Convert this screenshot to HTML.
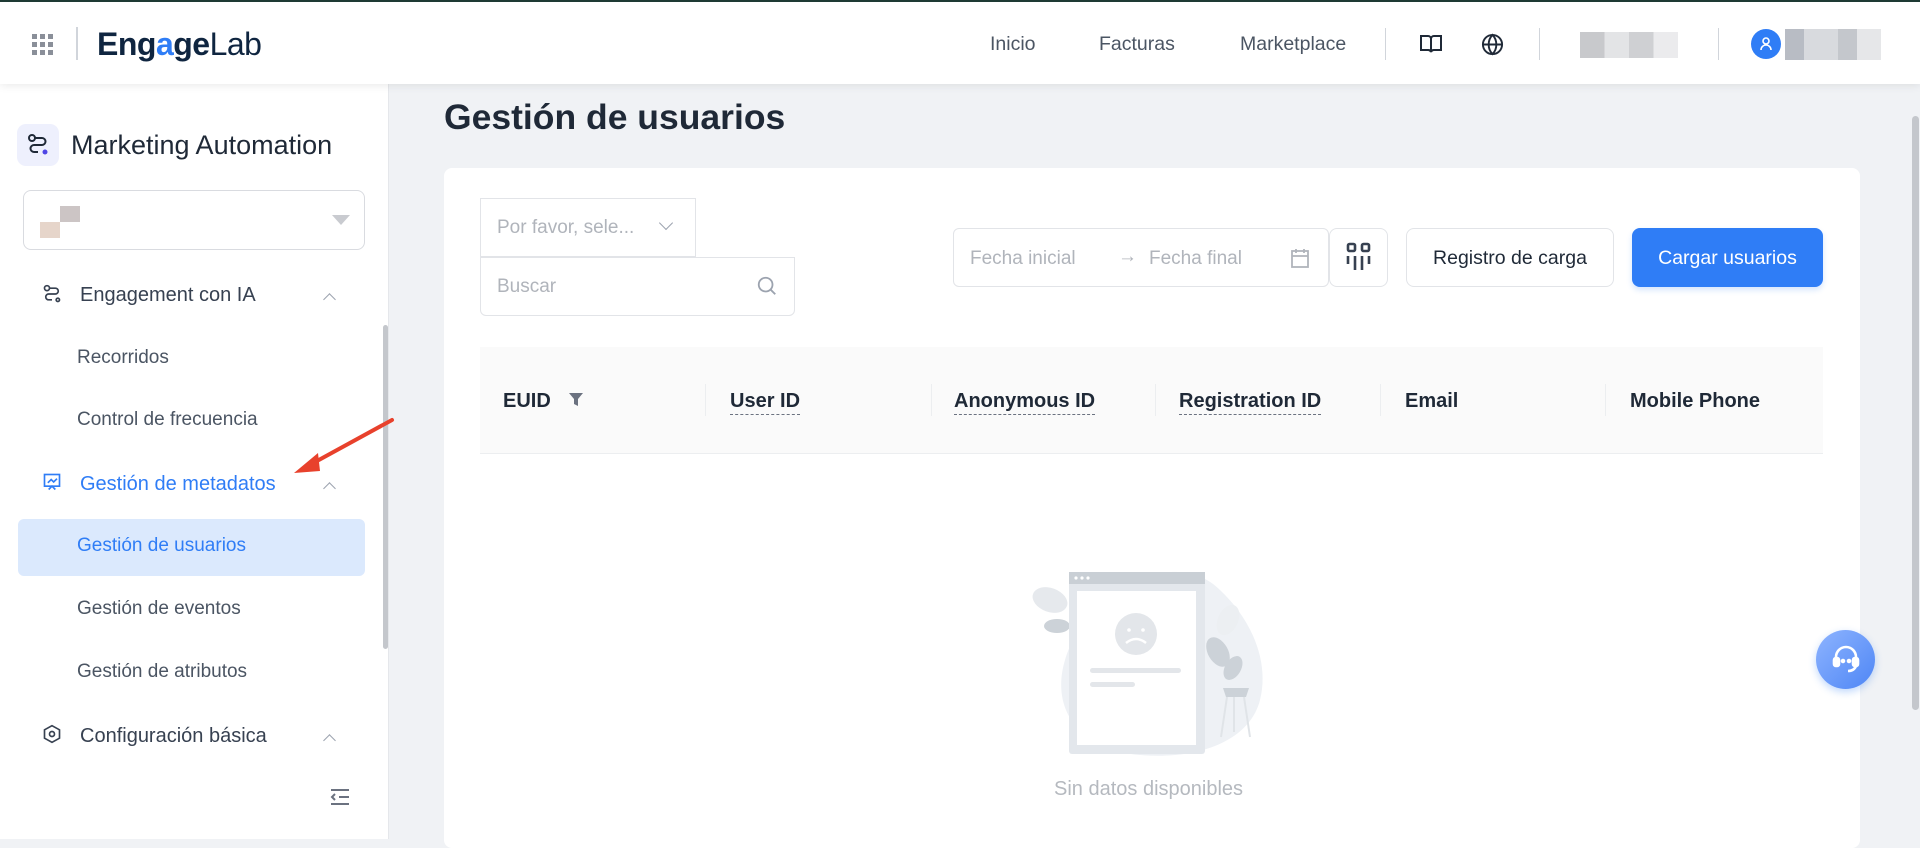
<!DOCTYPE html>
<html><head><meta charset="utf-8"><style>
*{box-sizing:border-box;margin:0;padding:0}
body{width:1920px;height:839px;overflow:hidden;background:#f0f2f5;font-family:"Liberation Sans",sans-serif;position:relative;color:#1f2937}
.a{position:absolute}
.hdr{left:0;top:0;width:1920px;height:84px;background:#fff;border-top:2px solid #1e3a34;box-shadow:0 2px 8px rgba(0,0,0,.08);z-index:5}
.nav{font-size:19.5px;color:#4b5563;top:31px}
.sep{width:1px;height:32px;background:#d1d5db;top:26px}
.side{left:0;top:84px;width:389px;height:755px;background:#fff;border-right:1px solid #e5e7eb}
.mi{font-size:20px;color:#374151}
.si{font-size:19px;color:#4b5563}
.th{font-size:20px;font-weight:bold;color:#1f2937;top:390px}
.dash{border-bottom:1px dashed #6b7280;padding-bottom:2px}
.csep{width:1px;height:32px;background:#eceef0;top:384px}
.chev{width:9px;height:9px;border-left:1.6px solid #9ca3af;border-top:1.6px solid #9ca3af;transform:rotate(45deg)}
</style></head><body>
<div class="a hdr">
 <svg class="a" style="left:32px;top:32px" width="22" height="22" viewBox="0 0 22 22" fill="#8a8f99"><rect x="0" y="0" width="5" height="5"/><rect x="8" y="0" width="5" height="5"/><rect x="16" y="0" width="5" height="5"/><rect x="0" y="8" width="5" height="5"/><rect x="8" y="8" width="5" height="5"/><rect x="16" y="8" width="5" height="5"/><rect x="0" y="16" width="5" height="5"/><rect x="8" y="16" width="5" height="5"/><rect x="16" y="16" width="5" height="5"/></svg>
 <div class="a" style="left:76px;top:25px;width:2px;height:33px;background:#d1d5db"></div>
 <div class="a" style="left:97px;top:24px;font-size:32px;color:#0f2540;letter-spacing:-0.5px"><b>Eng<span style="color:#2f7df6">a</span>ge</b>Lab</div>
 <div class="a nav" style="left:990px">Inicio</div>
 <div class="a nav" style="left:1099px">Facturas</div>
 <div class="a nav" style="left:1240px">Marketplace</div>
 <div class="a sep" style="left:1385px"></div>
 <svg class="a" style="left:1419px;top:32px" width="24" height="20" viewBox="0 0 24 20" fill="none" stroke="#1f2937" stroke-width="2"><path d="M2 2h7a3 3 0 0 1 3 3v13a3 3 0 0 0-3-2H2z M22 2h-7a3 3 0 0 0-3 3v13a3 3 0 0 1 3-2h7z"/></svg>
 <svg class="a" style="left:1481px;top:31px" width="23" height="23" viewBox="0 0 24 24" fill="none" stroke="#1f2937" stroke-width="2"><circle cx="12" cy="12" r="10"/><path d="M2 12h20M12 2c3 3 4 6.5 4 10s-1 7-4 10c-3-3-4-6.5-4-10s1-7 4-10z"/></svg>
 <div class="a sep" style="left:1539px"></div>
 <div class="a" style="left:1580px;top:30px;width:98px;height:26px;background:linear-gradient(90deg,#c8c9cc 0 25%,#e3e4e6 25% 50%,#cfd0d3 50% 75%,#ebebed 75%)"></div>
 <div class="a sep" style="left:1718px"></div>
 <div class="a" style="left:1751px;top:27px;width:30px;height:30px;border-radius:50%;background:#2f7df6"></div>
 <svg class="a" style="left:1759px;top:34px" width="14" height="15" viewBox="0 0 14 15" fill="none" stroke="#fff" stroke-width="1.6"><circle cx="7" cy="5" r="3"/><path d="M2 14a5 5 0 0 1 10 0"/></svg>
 <div class="a" style="left:1785px;top:27px;width:96px;height:31px;background:linear-gradient(90deg,#b8bcc4 0 20%,#d8dade 20% 55%,#c4c7cc 55% 75%,#e6e7e9 75%)"></div>
</div>
<div class="a side">
 <div class="a" style="left:17px;top:40px;width:42px;height:42px;border-radius:9px;background:#eef0fd"></div>
 <svg class="a" style="left:26px;top:49px" width="24" height="24" viewBox="0 0 24 24" fill="none" stroke="#1f2937" stroke-width="2"><circle cx="6" cy="5" r="3"/><path d="M9 5h7a3.5 3.5 0 0 1 0 7H8a3.5 3.5 0 0 0 0 7h4"/><circle cx="19" cy="19" r="2.5" fill="#4f46e5" stroke="none"/></svg>
 <div class="a" style="left:71px;top:46px;font-size:27px;color:#1f2937">Marketing Automation</div>
 <div class="a" style="left:23px;top:106px;width:342px;height:60px;border:1px solid #d9dbe0;border-radius:8px"></div>
 <div class="a" style="top:122px;width:20px;height:16px;background:#ccc5c5;left:60px"></div>
 <div class="a" style="left:40px;top:138px;width:20px;height:16px;background:#e6d5ca"></div>
 <div class="a" style="left:332px;top:131px;width:0;height:0;border-left:9px solid transparent;border-right:9px solid transparent;border-top:10px solid #c9cbd0"></div>
 <svg class="a" style="left:42px;top:200px" width="20" height="20" viewBox="0 0 24 24" fill="none" stroke="#374151" stroke-width="2"><circle cx="6" cy="5" r="3"/><path d="M9 5h7a3.5 3.5 0 0 1 0 7H8a3.5 3.5 0 0 0 0 7h4"/><circle cx="19" cy="19" r="2"/></svg>
 <div class="a mi" style="left:80px;top:200px">Engagement con IA</div>
 <div class="a chev" style="left:325px;top:211px"></div>
 <div class="a si" style="left:77px;top:263px">Recorridos</div>
 <div class="a si" style="left:77px;top:325px">Control de frecuencia</div>
 <svg class="a" style="left:42px;top:388px" width="20" height="20" viewBox="0 0 24 24" fill="none" stroke="#2f7df6" stroke-width="2"><rect x="3" y="3" width="18" height="14"/><path d="M7 13l4-4 3 3 4-4M8 21l4-4 4 4"/></svg>
 <div class="a mi" style="left:80px;top:389px;color:#2f7df6">Gestión de metadatos</div>
 <div class="a chev" style="left:325px;top:400px"></div>
 <div class="a" style="left:18px;top:435px;width:347px;height:57px;border-radius:6px;background:#dbe9fd"></div>
 <div class="a si" style="left:77px;top:451px;color:#2f7df6">Gestión de usuarios</div>
 <div class="a si" style="left:77px;top:514px">Gestión de eventos</div>
 <div class="a si" style="left:77px;top:577px">Gestión de atributos</div>
 <svg class="a" style="left:42px;top:640px" width="20" height="20" viewBox="0 0 24 24" fill="none" stroke="#374151" stroke-width="2"><path d="M12 2l9 5v10l-9 5-9-5V7z"/><circle cx="12" cy="12" r="3"/></svg>
 <div class="a mi" style="left:80px;top:641px">Configuración básica</div>
 <div class="a chev" style="left:325px;top:652px"></div>
 <svg class="a" style="left:330px;top:704px" width="20" height="18" viewBox="0 0 20 18" fill="none" stroke="#6b7280" stroke-width="2"><path d="M1 2h18M9 9h10M1 16h18M5 6L2 9l3 3"/></svg>
 <div class="a" style="left:383px;top:241px;width:5px;height:324px;border-radius:3px;background:#c4c7cc"></div>
</div>
<svg class="a" style="left:290px;top:415px;z-index:6" width="110" height="65" viewBox="0 0 110 65"><path d="M102 5L16 52" stroke="#e8412c" stroke-width="4" stroke-linecap="round"/><path d="M4 58L28 38 30 56z" fill="#e8412c"/></svg>
<div class="a" style="left:444px;top:97px;font-size:35.5px;font-weight:bold;color:#1f2937">Gestión de usuarios</div>
<div class="a" style="left:444px;top:168px;width:1416px;height:680px;background:#fff;border-radius:8px"></div>
<div class="a" style="left:480px;top:198px;width:216px;height:59px;border:1px solid #e2e4e8;font-size:19px;color:#b0b4bb;padding:18px 16px">Por favor, sele...</div>
<div class="a" style="left:661px;top:218px;width:10px;height:10px;border-right:1.6px solid #9ca3af;border-bottom:1.6px solid #9ca3af;transform:rotate(45deg)"></div>
<div class="a" style="left:480px;top:257px;width:315px;height:59px;border:1px solid #e2e4e8;border-radius:0 0 6px 6px;font-size:19px;color:#b0b4bb;padding:18px 16px">Buscar</div>
<svg class="a" style="left:756px;top:275px" width="22" height="22" viewBox="0 0 24 24" fill="none" stroke="#9ca3af" stroke-width="2"><circle cx="10.5" cy="10.5" r="7.5"/><path d="M16 16l5 5"/></svg>
<div class="a" style="left:953px;top:228px;width:376px;height:59px;border:1px solid #e2e4e8;border-radius:6px"></div>
<div class="a" style="left:970px;top:248px;font-size:19px;color:#b0b4bb">Fecha inicial</div>
<div class="a" style="left:1118px;top:246px;font-size:19px;color:#b0b4bb">→</div>
<div class="a" style="left:1149px;top:248px;font-size:19px;color:#b0b4bb">Fecha final</div>
<svg class="a" style="left:1291px;top:248px" width="18" height="20" viewBox="0 0 18 20" fill="none" stroke="#b0b4bb" stroke-width="1.8"><rect x="1" y="3" width="16" height="16"/><path d="M1 8h16M5 1v4M13 1v4"/></svg>
<div class="a" style="left:1329px;top:228px;width:59px;height:59px;border:1px solid #e2e4e8;border-radius:8px"></div>
<svg class="a" style="left:1345px;top:242px" width="28" height="30" viewBox="0 0 28 30" fill="none" stroke="#374151" stroke-width="2.6"><rect x="3" y="2" width="7" height="7" rx="1.5"/><rect x="17" y="2" width="7" height="7" rx="1.5"/><path d="M3 14v8M10 14v14M17 14v14M24 14v8"/></svg>
<div class="a" style="left:1406px;top:228px;width:208px;height:59px;border:1px solid #e2e4e8;border-radius:8px;font-size:19.5px;color:#1f2937;text-align:center;line-height:59px">Registro de carga</div>
<div class="a" style="left:1632px;top:228px;width:191px;height:59px;background:#2f7df6;border-radius:8px;font-size:19.5px;color:#fff;text-align:center;line-height:61px;box-shadow:0 3px 6px rgba(47,125,246,.2)">Cargar usuarios</div>
<div class="a" style="left:480px;top:347px;width:1343px;height:107px;background:#fafafa;border-bottom:1px solid #eceef0"></div>
<div class="a th" style="left:503px">EUID</div>
<svg class="a" style="left:568px;top:392px" width="16" height="16" viewBox="0 0 16 16" fill="#6b7280"><path d="M1 1h14l-5 6v7l-4-2V7z"/></svg>
<div class="a csep" style="left:705px"></div><div class="a csep" style="left:931px"></div><div class="a csep" style="left:1155px"></div><div class="a csep" style="left:1380px"></div><div class="a csep" style="left:1605px"></div>
<div class="a th" style="left:730px"><span class="dash">User ID</span></div>
<div class="a th" style="left:954px"><span class="dash">Anonymous ID</span></div>
<div class="a th" style="left:1179px"><span class="dash">Registration ID</span></div>
<div class="a th" style="left:1405px">Email</div>
<div class="a th" style="left:1630px">Mobile Phone</div>
<svg class="a" style="left:1030px;top:560px" width="240" height="200" viewBox="0 0 240 200">
 <path d="M80 40c30-30 80-40 110-10 30 28 50 70 40 110-10 40-60 60-120 55C50 190 20 150 35 100 42 75 60 55 80 40z" fill="#eef1f5"/>
 <ellipse cx="20" cy="40" rx="18" ry="12" fill="#e6e9ed" transform="rotate(20 20 40)"/>
 <ellipse cx="27" cy="66" rx="13" ry="7" fill="#ccd2d8"/>
 <rect x="39" y="12" width="136" height="182" rx="3" fill="#e3e7ec"/>
 <rect x="39" y="12" width="136" height="12" fill="#c9cfd5"/>
 <circle cx="46" cy="18" r="1.6" fill="#fff"/><circle cx="52" cy="18" r="1.6" fill="#fff"/><circle cx="58" cy="18" r="1.6" fill="#fff"/>
 <rect x="47" y="31" width="119" height="154" fill="#fff"/>
 <circle cx="106" cy="74" r="21" fill="#e3e6ea"/>
 <circle cx="99" cy="70" r="1.8" fill="#fff"/><circle cx="113" cy="70" r="1.8" fill="#fff"/>
 <path d="M96 83q10-8 20 0" stroke="#fff" stroke-width="2.5" fill="none"/>
 <rect x="60" y="108" width="91" height="5" rx="2.5" fill="#e3e6ea"/>
 <rect x="60" y="122" width="45" height="5" rx="2.5" fill="#e3e6ea"/>
 <ellipse cx="198" cy="60" rx="10" ry="16" fill="#eceff2" transform="rotate(25 198 60)"/>
 <ellipse cx="188" cy="92" rx="10" ry="16" fill="#ccd2d8" transform="rotate(-30 188 92)"/>
 <ellipse cx="203" cy="108" rx="8" ry="13" fill="#ccd2d8" transform="rotate(30 203 108)"/>
 <path d="M193 128h26l-3 9h-20z" fill="#ccd2d8"/>
 <path d="M197 137l-6 40M214 137l6 40M204 137v35" stroke="#e0e4e8" stroke-width="2"/>
</svg>
<div class="a" style="left:1054px;top:778px;font-size:20px;color:#b5b9bf">Sin datos disponibles</div>
<div class="a" style="left:1816px;top:630px;width:59px;height:59px;border-radius:50%;background:linear-gradient(135deg,#8eb4ff,#4e86f5);box-shadow:0 3px 8px rgba(47,125,246,.3)"></div>
<svg class="a" style="left:1830px;top:643px" width="32" height="32" viewBox="0 0 32 32" fill="none" stroke="#fff" stroke-width="2.6"><path d="M6 18v-4a10 10 0 0 1 20 0v4"/><rect x="4" y="15" width="5" height="8" rx="2" fill="#fff"/><rect x="23" y="15" width="5" height="8" rx="2" fill="#fff"/><path d="M26 23q-2 5-8 5"/><circle cx="13" cy="18" r="1" fill="#fff"/><circle cx="19" cy="18" r="1" fill="#fff"/></svg>
<div class="a" style="left:1912px;top:116px;width:7px;height:594px;border-radius:4px;background:#c4c7cc"></div>
</body></html>
